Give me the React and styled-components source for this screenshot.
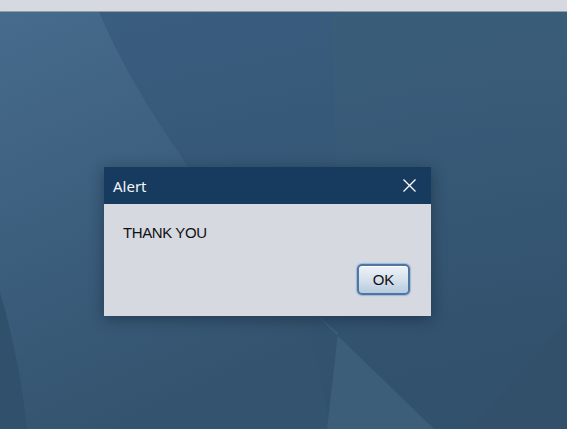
import React from "react";
import styled, { createGlobalStyle } from "styled-components";

const GlobalStyle = createGlobalStyle`
  html, body {
    margin: 0;
    padding: 0;
    width: 567px;
    height: 429px;
    overflow: hidden;
  }
  #root {
    height: 100%;
  }
`;

const Screen = styled.div`
  width: 567px;
  height: 429px;
  display: flex;
  flex-direction: column;
  background: #d6d9e0;
`;

const TopStrip = styled.div`
  height: 11px;
  flex: none;
  background: #d6d9e0;
  border-bottom: 1px solid #8f9cab;
`;

const Desktop = styled.div`
  position: relative;
  flex: 1;
  overflow: hidden;
  background: #385a7a;
`;

const Wallpaper = styled.svg`
  position: absolute;
  inset: 0;
  display: block;
`;

// the window sits on the desktop at its own place
const Window = styled.div`
  position: absolute;
  left: 104px;
  top: 155px;
  width: 327px;
  display: flex;
  flex-direction: column;
  background: #d6d9e0;
  box-shadow: 0 3px 14px rgba(10, 25, 40, 0.45);
`;

const TitleBar = styled.div`
  height: 37px;
  display: flex;
  align-items: center;
  justify-content: space-between;
  padding: 0 15px 0 9px;
  background: #173b5f;
`;

const Title = styled.span`
  font-family: "Noto Sans", "Open Sans", sans-serif;
  font-size: 15px;
  color: #f4f6f9;
`;

const CloseButton = styled.button`
  width: 13px;
  height: 13px;
  padding: 0;
  border: none;
  background: none;
  display: flex;
  cursor: pointer;
`;

const Body = styled.div`
  display: flex;
  flex-direction: column;
  padding: 20px 21px 21px 19px;
`;

const Message = styled.div`
  font-family: "Liberation Sans", Arial, sans-serif;
  font-size: 15px;
  line-height: 17px;
  letter-spacing: -0.4px;
  color: #111111;
`;

const Actions = styled.div`
  display: flex;
  justify-content: flex-end;
  margin-top: 23px;
`;

const OkButton = styled.button`
  width: 53px;
  height: 31px;
  box-sizing: border-box;
  border: 2px solid #4f76a1;
  border-radius: 5px;
  background: linear-gradient(#eef3f8, #d6e1ec 50%, #b8cbdf);
  box-shadow: 0 0 1px 1px rgba(130, 170, 215, 0.7),
    inset 0 1px 0 rgba(255, 255, 255, 0.8);
  font-family: "Liberation Sans", Arial, sans-serif;
  font-size: 15px;
  color: #111111;
  padding: 0;
  cursor: pointer;
`;

function DesktopWallpaper() {
  return (
    <Wallpaper width="567" height="417" viewBox="0 0 567 417">
      <defs>
        <linearGradient id="base" x1="0" y1="0" x2="0.3" y2="1">
          <stop offset="0" stopColor="#3a5e81" />
          <stop offset="1" stopColor="#32516c" />
        </linearGradient>
        <linearGradient id="lightLeft" x1="0" y1="0" x2="0.35" y2="1">
          <stop offset="0" stopColor="#476b8c" />
          <stop offset="0.55" stopColor="#3b5e7d" />
          <stop offset="1" stopColor="#34536e" />
        </linearGradient>
        <linearGradient id="rightSide" x1="0" y1="0" x2="0" y2="1">
          <stop offset="0" stopColor="#3a5d78" stopOpacity="0.8" />
          <stop offset="0.6" stopColor="#3a5d78" stopOpacity="0.2" />
          <stop offset="1" stopColor="#3a5d78" stopOpacity="0" />
        </linearGradient>
      </defs>
      <rect x="0" y="0" width="567" height="417" fill="url(#base)" />
      <path d="M332 0 L567 0 L567 300 L340 300 Z" fill="url(#rightSide)" />
      <path
        d="M0 0 L99 0 C120 50 150 100 185 150 C215 200 260 250 306 293 L330 417 L0 417 Z"
        fill="url(#lightLeft)"
      />
      <path d="M0 281 C12 320 22 370 27 417 L0 417 Z" fill="#30506b" />
      <path d="M306 293 L434 417 L327 417 L338 321 Z" fill="#3c5e79" />
      <path d="M470 417 L567 311 L567 417 Z" fill="#33506a" />
    </Wallpaper>
  );
}

export default function App() {
  return (
    <>
      <GlobalStyle />
      <Screen>
        <TopStrip />
        <Desktop>
          <DesktopWallpaper />
          <Window>
            <TitleBar>
              <Title>Alert</Title>
              <CloseButton aria-label="Close">
                <svg width="13" height="13" viewBox="0 0 13 13">
                  <path d="M0.5 0.5 L12.5 12.5 M12.5 0.5 L0.5 12.5" stroke="#ffffff" strokeWidth="1.3" />
                </svg>
              </CloseButton>
            </TitleBar>
            <Body>
              <Message>THANK YOU</Message>
              <Actions>
                <OkButton>OK</OkButton>
              </Actions>
            </Body>
          </Window>
        </Desktop>
      </Screen>
    </>
  );
}
